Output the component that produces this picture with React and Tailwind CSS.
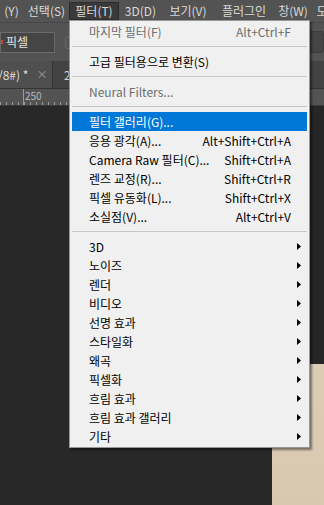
const font = { fontFamily: '"Noto Sans CJK KR", "Noto Sans", sans-serif' };

const topItems = [
  { label: "(Y)", w: "w-[25px]", off: "-ml-[1px]" },
  { label: "선택(S)", w: "w-[45px]" },
  { label: "필터(T)", w: "w-[50px]", active: true },
  { label: "3D(D)", w: "w-[43px]" },
  { label: "보기(V)", w: "w-[52px]" },
  { label: "플러그인", w: "w-[60px]" },
  { label: "창(W)", w: "w-[38px]" },
  { label: "도", w: "w-[20px]" },
];

const groups = [
  [{ label: "마지막 필터(F)", key: "Alt+Ctrl+F", disabled: true }],
  [{ label: "고급 필터용으로 변환(S)" }],
  [{ label: "Neural Filters...", disabled: true }],
  [
    { label: "필터 갤러리(G)...", hot: true },
    { label: "응용 광각(A)...", key: "Alt+Shift+Ctrl+A" },
    { label: "Camera Raw 필터(C)...", key: "Shift+Ctrl+A" },
    { label: "렌즈 교정(R)...", key: "Shift+Ctrl+R" },
    { label: "픽셀 유동화(L)...", key: "Shift+Ctrl+X" },
    { label: "소실점(V)...", key: "Alt+Ctrl+V" },
  ],
  [
    "3D",
    "노이즈",
    "렌더",
    "비디오",
    "선명 효과",
    "스타일화",
    "왜곡",
    "픽셀화",
    "흐림 효과",
    "흐림 효과 갤러리",
    "기타",
  ].map((label) => ({ label, sub: true })),
];

function Arrow() {
  return (
    <svg width="4" height="7" viewBox="0 0 4 7" className="block">
      <path d="M0 0 L4 3.5 L0 7 Z" fill="#000" />
    </svg>
  );
}

function MenuRow({ item }) {
  const color = item.hot ? "text-white" : item.disabled ? "text-[#6d6d6d]" : "text-black";
  return (
    <div
      className={`mx-[2px] h-[19px] flex items-center pl-[17px] pr-[6px] ${color} ${
        item.hot ? "bg-[#0078d7]" : ""
      }`}
    >
      <span className="flex-1 whitespace-nowrap">{item.label}</span>
      {item.key && <span className="mr-[10px] whitespace-nowrap">{item.key}</span>}
      {item.sub && <Arrow />}
    </div>
  );
}

function Ruler() {
  const ticks = Array.from({ length: 50 }, (_, i) => i);
  return (
    <div className="relative h-[17px] bg-[#535353] border-b border-[#3a3a3a] overflow-hidden">
      <div className="absolute left-[23px] top-0 h-full w-px bg-[#9a9a9a]" />
      <span className="absolute left-[25px] top-[2px] text-[10px] leading-none text-[#b8b8b8]">250</span>
      <div className="absolute bottom-0 left-0 flex">
        {ticks.map((i) => (
          <div key={i} className="w-[6px] h-[3px] border-l border-[#9a9a9a]" />
        ))}
      </div>
    </div>
  );
}

export default function App() {
  return (
    <div className="relative w-[324px] h-[505px] overflow-hidden bg-[#282828] text-[12px]" style={font}>
      {/* menu bar */}
      <div className="h-[22px] bg-[#535353] flex items-center text-[#dadada] whitespace-nowrap">
        {topItems.map((t) => (
          <div
            key={t.label}
            className={`${t.w} shrink-0 h-[18px] flex items-center justify-center ${
              t.active ? "bg-[#3a3a3a] border border-[#2c2c2c]" : ""
            } ${t.off || ""}`}
          >
            {t.label}
          </div>
        ))}
      </div>

      {/* options bar */}
      <div className="h-[39px] bg-[#535353] border-t border-[#464646] flex items-center gap-[10px]">
        <div className="w-[55px] h-[21px] bg-[#454545] border border-[#6a6a6a] flex items-center gap-[3px] text-[#e6e6e6]">
          <span className="w-[2px] h-[4px] bg-[#d04040]" />
          <span>픽셀</span>
        </div>
        <div className="w-[20px] h-[13px] rounded-[3px] border border-[#6a6a6a]" />
        <div className="ml-auto w-[20px] h-[22px] rounded-[3px] bg-[#454545] border border-[#3c3c3c]" />
      </div>

      {/* tab strip */}
      <div className="h-[28px] bg-[#424242] flex border-b border-[#333]">
        <div className="w-[54px] bg-[#4f4f4f] flex items-center text-[#dedede] -ml-[2px] gap-[8px]">
          <span>/8#) *</span>
          <span className="text-[#a0a0a0] text-[11px]">×</span>
        </div>
        <div className="flex items-center pl-[11px] text-[#cfcfcf] border-l border-[#333]">250</div>
      </div>

      <Ruler />

      {/* canvas area */}
      <div className="flex h-[400px]">
        <div className="flex-1" />
        <div className="w-[52px] flex flex-col">
          <div className="h-[258px] bg-[#262626]" />
          <div className="flex-1 bg-gradient-to-b from-[#dccdb7] to-[#d9c8b1]" />
        </div>
      </div>

      {/* filter menu */}
      <div className="absolute left-[69px] top-[20px] w-[241px] bg-[#f0f0f0] border border-[#979797] py-[1px] shadow-[2px_2px_2px_rgba(0,0,0,0.45)] leading-none">
        {groups.map((g, gi) => (
          <div key={gi}>
            {gi > 0 && (
              <div className="mx-[2px] h-[11px] flex items-center">
                <div className="w-full h-px bg-[#c6c6c6]" />
              </div>
            )}
            {g.map((item) => (
              <MenuRow key={item.label} item={item} />
            ))}
          </div>
        ))}
      </div>
    </div>
  );
}
